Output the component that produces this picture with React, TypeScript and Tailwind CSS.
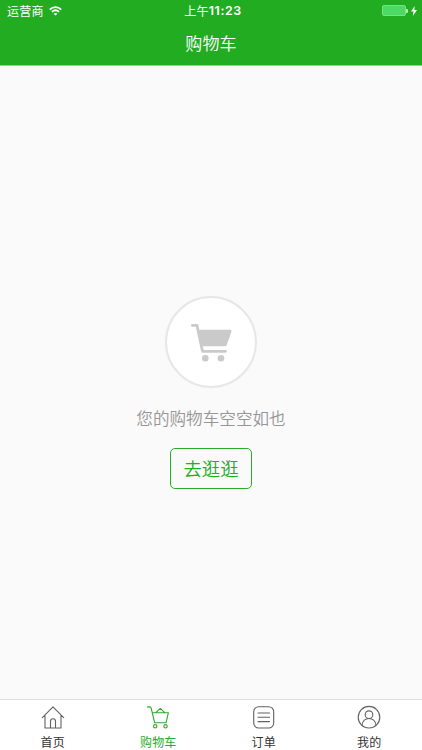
import type { ReactNode } from 'react';

function StatusBar() {
  return (
    <div className="flex h-[22px] items-center text-[12px] leading-[22px]">
      <div className="flex flex-1 items-center gap-[5px] pl-[7px]">
        <span className="tracking-[0.2px]">运营商</span>
        <svg className="-mt-px" width="13" height="10" viewBox="0 0 13 10" fill="none" stroke="currentColor" strokeWidth="1.8">
          <path d="M0.8 3.6C4 .4 9 .4 12.2 3.6" />
          <path d="M2.9 5.9C5 4 8 4 10.1 5.9" />
          <path d="M6.5 9.6L4.6 7.7C5.7 6.8 7.3 6.8 8.4 7.7Z" fill="currentColor" stroke="none" />
        </svg>
      </div>
      <div className="flex items-center pl-[2px]">
        <span className="tracking-[0.3px]">上午</span>
        <span className="font-['Inter'] text-[12.4px] font-semibold tracking-[0.6px]">11:23</span>
      </div>
      <div className="-mt-px flex flex-1 items-center justify-end pr-[5px]">
        <div className="h-[11px] w-[24px] rounded-[2px] border border-[#82dd82] bg-[#4cd964]" />
        <div className="h-[4px] w-[2px] rounded-r-[1px] bg-[#b5eab5]" />
        <svg className="ml-[3px]" width="6" height="10" viewBox="0 0 6 10" fill="currentColor">
          <path d="M3.7 0L0 5.6H2.5L1.8 10L6 4H3.4Z" />
        </svg>
      </div>
    </div>
  );
}

function Tab({ label, active, children }: { label: string; active?: boolean; children: ReactNode }) {
  return (
    <a className={`flex flex-1 flex-col items-center pt-[5px] ${active ? 'text-[#2bab2b]' : 'text-[#333]'}`}>
      <svg
        className="shrink-0"
        width="24"
        height="26"
        viewBox="0 0 24 26"
        fill="none"
        stroke={active ? '#2bab2b' : '#626262'}
        strokeWidth="1.1"
        strokeLinecap="round"
        strokeLinejoin="round"
      >
        {children}
      </svg>
      <span className="mt-[3px] text-[12px] leading-[16px] tracking-[0.2px]">{label}</span>
    </a>
  );
}

export default function App() {
  return (
    <div className="flex h-[750px] w-[422px] flex-col bg-[#fafafa] font-['Noto_Sans_CJK_SC','Noto_Sans',sans-serif]">
      <header className="h-[66px] border-b border-[#8fd68f] bg-[#22ac22] text-white">
        <StatusBar />
        <h1 className="text-center text-[17px] leading-[42px] font-[350] tracking-[0.2px]">购物车</h1>
      </header>

      <main className="flex flex-1 flex-col items-center pt-[230px]">
        <div className="flex h-[92px] w-[92px] items-center justify-center rounded-full border-2 border-[#e6e7e9] bg-white">
          <svg width="42" height="40" viewBox="0 0 42 40" fill="#cacaca">
            <path d="M2.4 3.4H7L12.5 29.3H35.5" fill="none" stroke="#cacaca" strokeWidth="2.8" strokeLinecap="round" strokeLinejoin="round" />
            <path d="M9 7.7H40Q42 7.7 41.4 9.7L36.8 22.7Q36.3 24.2 34.7 24.2H12.5Z" />
            <circle cx="15.3" cy="36.2" r="3.3" />
            <circle cx="31" cy="36.2" r="3.3" />
          </svg>
        </div>
        <p className="mt-[18px] text-[16.6px] leading-[24px] font-[350] text-[#969696]">您的购物车空空如也</p>
        <button className="mt-[18px] h-[41px] w-[82px] rounded-[5px] border border-[#2bab2b] text-[18.4px] leading-[39px] font-[350] text-[#22ac22]">
          去逛逛
        </button>
      </main>

      <nav className="flex h-[51px] border-t border-[#dedede] bg-white">
        <Tab label="首页">
          <path d="M1.3 12.6L12 1.8L22.7 12.6M4 10.5V23H20V10.5M9.5 23V16.2A2.5 2.5 0 0 1 14.5 16.2V23" />
        </Tab>
        <Tab label="购物车" active>
          <path d="M1.5 1.9H3.8Q4.8 1.9 5.1 3L8.7 17.8H20L22.4 7.7H6.3M9.8 7.7L14.3 3.4L18.8 7.7" />
          <circle cx="9.2" cy="21.3" r="1.7" />
          <circle cx="19.5" cy="21.3" r="1.7" />
        </Tab>
        <Tab label="订单">
          <rect x="1.7" y="1.7" width="20" height="21.3" rx="5" />
          <path d="M6 8H17.5M6 12.3H17.5M6 16.6H17.5" />
        </Tab>
        <Tab label="我的">
          <circle cx="12" cy="12.2" r="10.8" />
          <circle cx="12" cy="9.7" r="3.8" />
          <path d="M5.1 20.3C5.4 11.2 18.6 11.2 18.9 20.3" />
        </Tab>
      </nav>
    </div>
  );
}
